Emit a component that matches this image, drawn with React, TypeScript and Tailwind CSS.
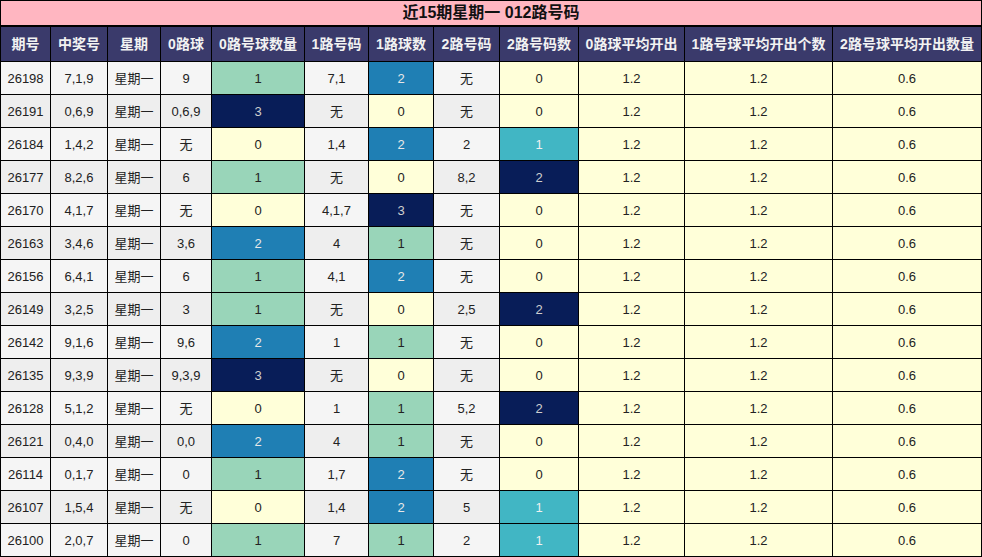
const headers = [
  "期号",
  "中奖号",
  "星期",
  "0路球",
  "0路号球数量",
  "1路号码",
  "1路球数",
  "2路号码",
  "2路号码数",
  "0路球平均开出",
  "1路号球平均开出个数",
  "2路号球平均开出数量",
];

// c0/c1/c2 = count cells: [value, colour key]
type Cnt = [string, "y" | "g" | "b" | "n" | "t"];

interface Row {
  id: string;
  nums: string;
  zero: string;
  c0: Cnt;
  one: string;
  c1: Cnt;
  two: string;
  c2: Cnt;
}

const rows: Row[] = [
  { id: "26198", nums: "7,1,9", zero: "9", c0: ["1", "g"], one: "7,1", c1: ["2", "b"], two: "无", c2: ["0", "y"] },
  { id: "26191", nums: "0,6,9", zero: "0,6,9", c0: ["3", "n"], one: "无", c1: ["0", "y"], two: "无", c2: ["0", "y"] },
  { id: "26184", nums: "1,4,2", zero: "无", c0: ["0", "y"], one: "1,4", c1: ["2", "b"], two: "2", c2: ["1", "t"] },
  { id: "26177", nums: "8,2,6", zero: "6", c0: ["1", "g"], one: "无", c1: ["0", "y"], two: "8,2", c2: ["2", "n"] },
  { id: "26170", nums: "4,1,7", zero: "无", c0: ["0", "y"], one: "4,1,7", c1: ["3", "n"], two: "无", c2: ["0", "y"] },
  { id: "26163", nums: "3,4,6", zero: "3,6", c0: ["2", "b"], one: "4", c1: ["1", "g"], two: "无", c2: ["0", "y"] },
  { id: "26156", nums: "6,4,1", zero: "6", c0: ["1", "g"], one: "4,1", c1: ["2", "b"], two: "无", c2: ["0", "y"] },
  { id: "26149", nums: "3,2,5", zero: "3", c0: ["1", "g"], one: "无", c1: ["0", "y"], two: "2,5", c2: ["2", "n"] },
  { id: "26142", nums: "9,1,6", zero: "9,6", c0: ["2", "b"], one: "1", c1: ["1", "g"], two: "无", c2: ["0", "y"] },
  { id: "26135", nums: "9,3,9", zero: "9,3,9", c0: ["3", "n"], one: "无", c1: ["0", "y"], two: "无", c2: ["0", "y"] },
  { id: "26128", nums: "5,1,2", zero: "无", c0: ["0", "y"], one: "1", c1: ["1", "g"], two: "5,2", c2: ["2", "n"] },
  { id: "26121", nums: "0,4,0", zero: "0,0", c0: ["2", "b"], one: "4", c1: ["1", "g"], two: "无", c2: ["0", "y"] },
  { id: "26114", nums: "0,1,7", zero: "0", c0: ["1", "g"], one: "1,7", c1: ["2", "b"], two: "无", c2: ["0", "y"] },
  { id: "26107", nums: "1,5,4", zero: "无", c0: ["0", "y"], one: "1,4", c1: ["2", "b"], two: "5", c2: ["1", "t"] },
  { id: "26100", nums: "2,0,7", zero: "0", c0: ["1", "g"], one: "7", c1: ["1", "g"], two: "2", c2: ["1", "t"] },
];

const heat: Record<Cnt[1], string> = {
  y: "bg-[#ffffd9] text-[#222]",
  g: "bg-[#99d5b9] text-[#222]",
  b: "bg-[#1f7fb4] text-[#e8e8e8]",
  n: "bg-[#081d58] text-[#cfcfcf]",
  t: "bg-[#41b6c4] text-[#f0f0f0]",
};

function Cell({ children, cls }: { children: React.ReactNode; cls: string }) {
  return <div className={`flex items-center justify-center text-[13px] pt-px ${cls}`}>{children}</div>;
}

export default function App() {
  return (
    <div
      className="w-[982px] h-[557px] bg-black p-px grid gap-px grid-cols-[49px_56px_52px_50px_92px_63px_64px_65px_78px_105px_147px_148px] grid-rows-[25px_34px_repeat(15,32px)]"
      style={{ fontFamily: '"Liberation Sans", "Noto Sans CJK SC", sans-serif' }}
    >
      <div className="col-span-12 mb-px bg-[#ffb6c1] flex items-center justify-center text-[16px] font-bold text-[#111]">
        近15期星期一 012路号码
      </div>

      {headers.map((h) => (
        <div
          key={h}
          className="bg-[#3a3a6b] text-[#f2f2f2] font-bold text-[14px] flex items-center justify-center whitespace-nowrap"
        >
          {h}
        </div>
      ))}

      {rows.map((r, i) => {
        const plain = i % 2 === 0 ? "bg-[#f5f5f5] text-[#222]" : "bg-[#eeeeee] text-[#222]";
        return [
          <Cell key={r.id + "a"} cls={plain}>{r.id}</Cell>,
          <Cell key={r.id + "b"} cls={plain}>{r.nums}</Cell>,
          <Cell key={r.id + "c"} cls={plain}>星期一</Cell>,
          <Cell key={r.id + "d"} cls={plain}>{r.zero}</Cell>,
          <Cell key={r.id + "e"} cls={heat[r.c0[1]]}>{r.c0[0]}</Cell>,
          <Cell key={r.id + "f"} cls={plain}>{r.one}</Cell>,
          <Cell key={r.id + "g"} cls={heat[r.c1[1]]}>{r.c1[0]}</Cell>,
          <Cell key={r.id + "h"} cls={plain}>{r.two}</Cell>,
          <Cell key={r.id + "i"} cls={heat[r.c2[1]]}>{r.c2[0]}</Cell>,
          <Cell key={r.id + "j"} cls="bg-[#ffffd9] text-[#222]">1.2</Cell>,
          <Cell key={r.id + "k"} cls="bg-[#ffffd9] text-[#222]">1.2</Cell>,
          <Cell key={r.id + "l"} cls="bg-[#ffffd9] text-[#222]">0.6</Cell>,
        ];
      })}
    </div>
  );
}
